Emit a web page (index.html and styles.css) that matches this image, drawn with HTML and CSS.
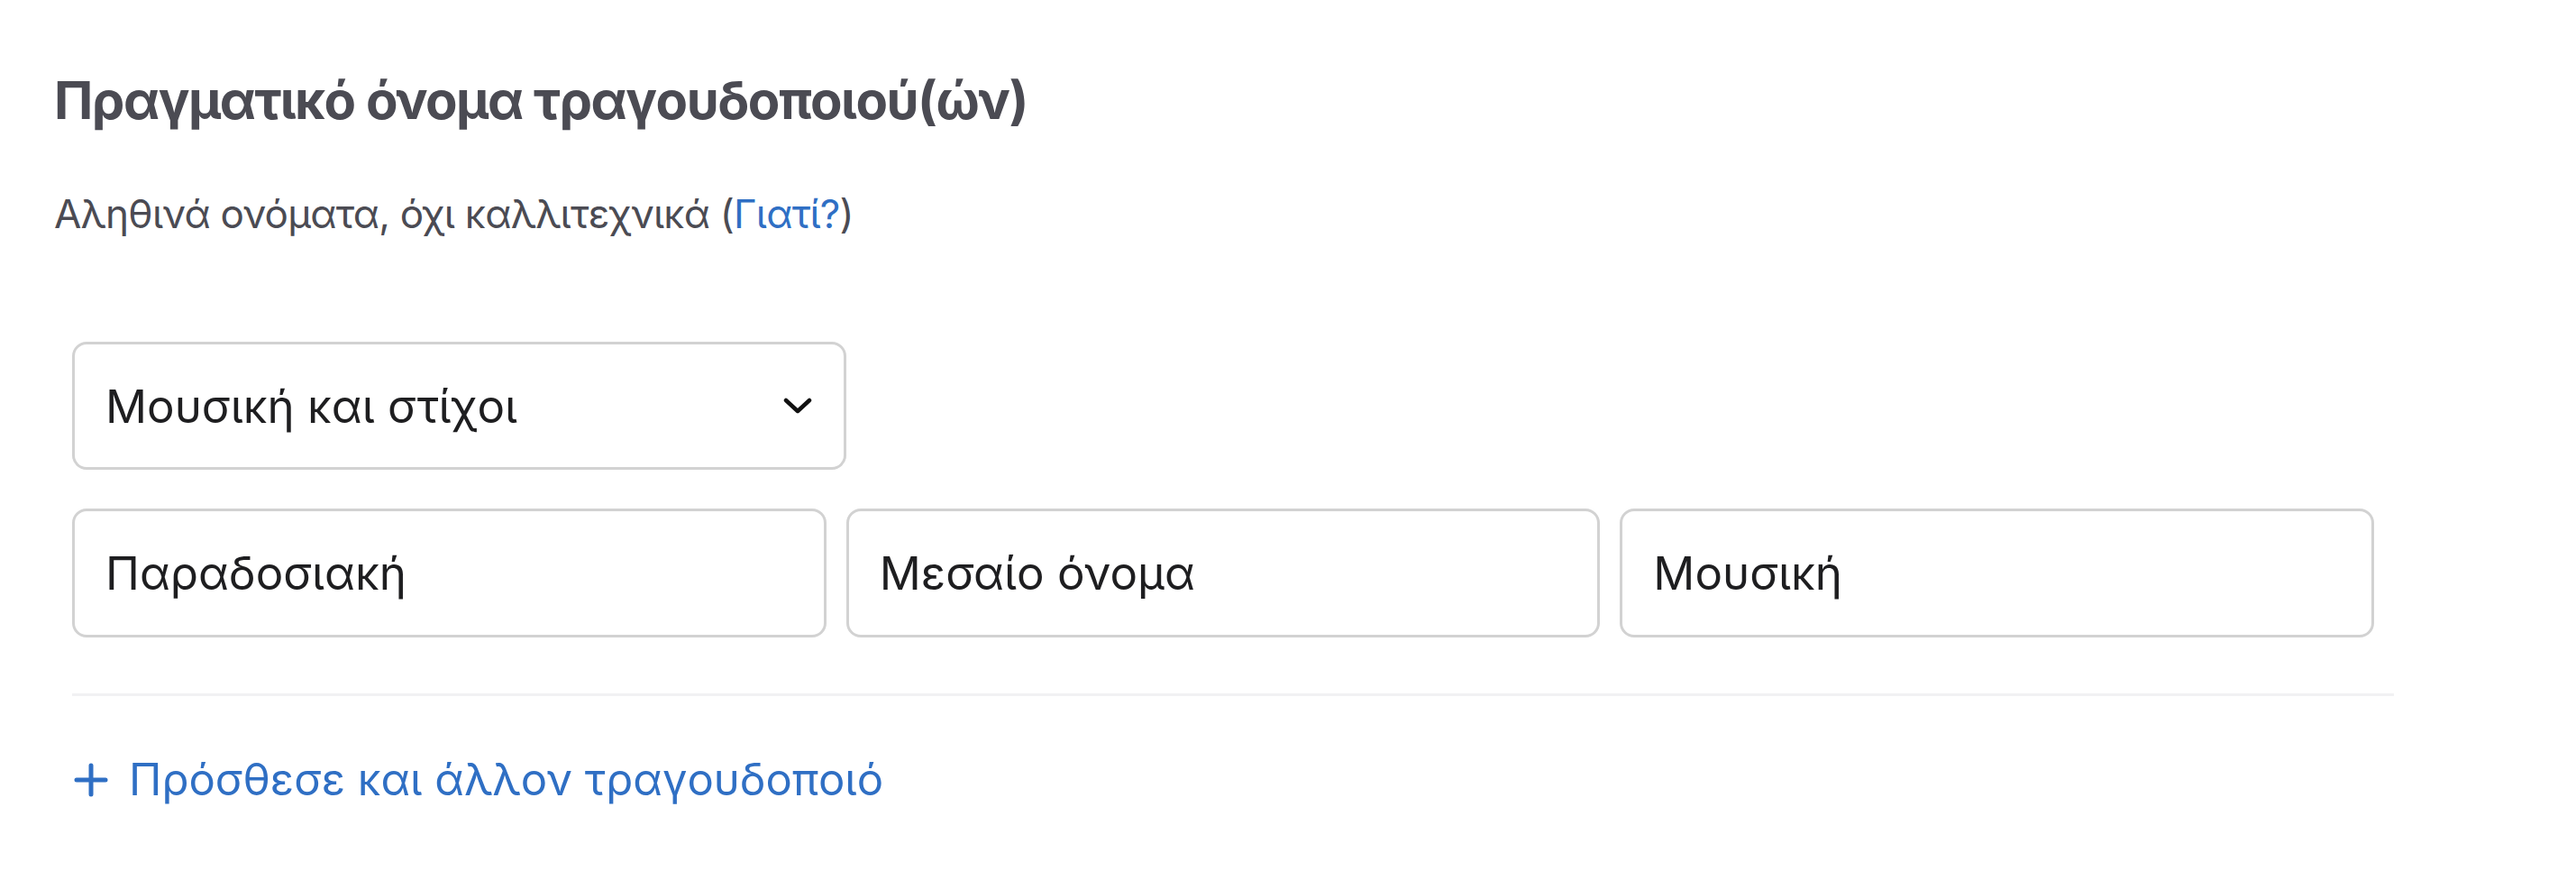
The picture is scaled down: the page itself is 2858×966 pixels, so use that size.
FILE: index.html
```html
<!DOCTYPE html>
<html lang="el">
<head>
<meta charset="utf-8">
<title>Τραγουδοποιοί</title>
<link rel="stylesheet" href="styles.css">
</head>
<body>
<section class="songwriters">
  <h2 class="songwriters__title">Πραγματικό όνομα τραγουδοποιού(ών)</h2>
  <p class="songwriters__hint">Αληθινά ονόματα, όχι καλλιτεχνικά (<a href="#" class="link">Γιατί?</a>)</p>

  <div class="writer">
    <div class="select">
      <span class="select__value">Μουσική και στίχοι</span>
      <svg class="select__chevron" viewBox="0 0 32 18" aria-hidden="true">
        <path d="M3 3 L16 15 L29 3" fill="none" stroke="currentColor" stroke-width="4.5" stroke-linecap="round" stroke-linejoin="round"/>
      </svg>
    </div>
    <div class="name-row">
      <div class="field"><div class="input">Παραδοσιακή</div></div>
      <div class="field"><div class="input">Μεσαίο όνομα</div></div>
      <div class="field"><div class="input">Μουσική</div></div>
    </div>
  </div>

  <hr class="divider">

  <a href="#" class="add-link">
    <svg class="add-link__icon" viewBox="0 0 38 38" aria-hidden="true">
      <path d="M19 3 V35 M3 19 H35" fill="none" stroke="currentColor" stroke-width="5" stroke-linecap="round"/>
    </svg>
    <span>Πρόσθεσε και άλλον τραγουδοποιό</span>
  </a>
</section>
</body>
</html>
```

FILE: styles.css
```css
html, body {
  margin: 0;
  padding: 0;
  background: #ffffff;
}

body {
  font-family: Inter, "Noto Sans", "Liberation Sans", sans-serif;
}

.songwriters {
  padding: 76px 0 40px 60px;
  width: 2596px;
}

.songwriters__title {
  margin: 0;
  font-size: 58px;
  line-height: 70px;
  font-weight: 700;
  letter-spacing: -1.5px;
  color: #4b4b53;
}

.songwriters__hint {
  margin: 65px 0 0;
  font-size: 44px;
  line-height: 53px;
  font-weight: 400;
  letter-spacing: -0.75px;
  color: #4b4b53;
}

.link {
  color: #2f6fc4;
  text-decoration: none;
}

.writer {
  margin: 115px 0 0 20px;
  width: 2576px;
}

.select {
  box-sizing: border-box;
  width: calc(100% / 3);
  height: 142px;
  border: 3px solid #d2d2d2;
  border-radius: 16px;
  display: flex;
  align-items: center;
  justify-content: space-between;
  padding: 0 35px 0 34px;
  font-size: 51px;
  color: #1e1e20;
}

.select__chevron {
  width: 32px;
  height: 18px;
  color: #111111;
}

.name-row {
  margin-top: 43px;
  display: flex;
}

.field {
  flex: 1 1 0;
  padding-right: 22px;
}

.input {
  box-sizing: border-box;
  height: 143px;
  border: 3px solid #d2d2d2;
  border-radius: 16px;
  display: flex;
  align-items: center;
  padding: 0 34px;
  font-size: 51px;
  color: #1e1e20;
}

.divider {
  margin: 62px 0 0 20px;
  width: 2576px;
  height: 3px;
  border: 0;
  background: #f1f1f3;
}

.add-link {
  margin: 64px 0 0 22px;
  display: inline-flex;
  align-items: center;
  gap: 23px;
  font-size: 49px;
  line-height: 58px;
  color: #2f6fc4;
  text-decoration: none;
}

.add-link__icon {
  width: 38px;
  height: 38px;
}
```
